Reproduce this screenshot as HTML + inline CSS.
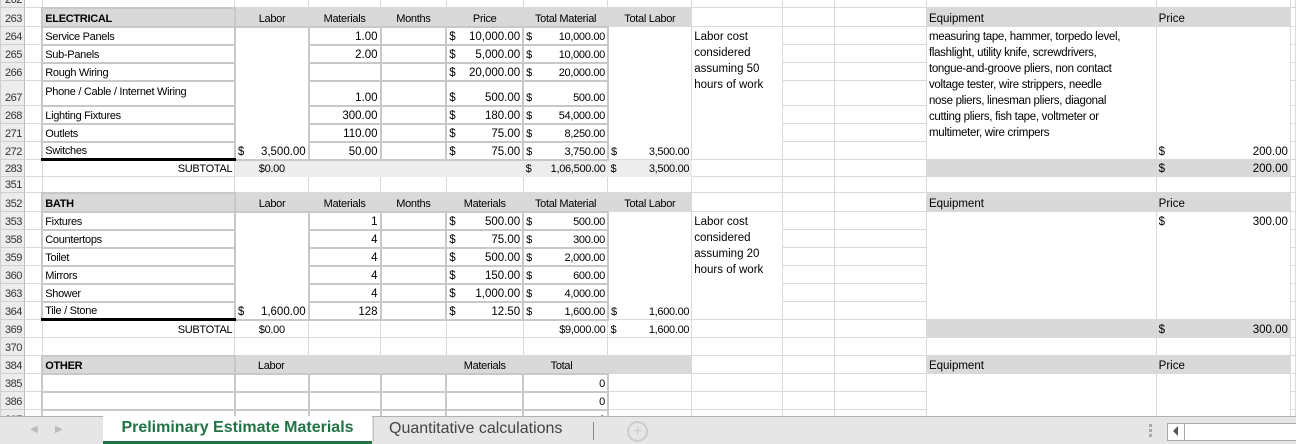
<!DOCTYPE html>
<html><head><meta charset="utf-8"><style>
body{margin:0;width:1296px;height:443px;overflow:hidden;background:#fff;font-family:"Liberation Sans",sans-serif;position:relative}
table{border-collapse:collapse;table-layout:fixed;position:absolute;left:0;top:-10px}
td{border:1px solid #dadada;padding:0 2px;font-size:11px;color:#000;white-space:nowrap;overflow:hidden;letter-spacing:-0.3px;vertical-align:bottom;line-height:14px}
td.rn{background:#ececec;border:1px solid #cfcfcf;border-right:1px solid #bdbdbd;color:#333;font-size:11px;padding-left:4px;letter-spacing:-0.5px}
td.sp{border-left:none}
.h{background:#d9d9d9;border-color:#d9d9d9}
.hb{font-weight:bold}
.c{text-align:center}
.r{text-align:right}
.b{border:2px solid #c8c8c8}
.d{float:left}
.cal{font-size:11.5px;letter-spacing:0}
.sub{background:#ededed;border-color:#ededed}
.sk{background:#d9d9d9;border-color:#d9d9d9}
.top{vertical-align:top}
.wrap{white-space:normal;line-height:16px;letter-spacing:0;padding-top:2px}
.eq{white-space:nowrap;font-size:11.5px;letter-spacing:-0.3px;line-height:16px;padding-top:2px;vertical-align:top}
.tl{border-bottom:3px solid #000}
#tabs{position:absolute;left:0;top:416px;width:1296px;height:27px;background:#e6e6e6;border-top:1px solid #b0b0b0}
</style></head><body>
<table>
<colgroup><col style="width:23px"><col style="width:18px"><col style="width:193px"><col style="width:74px"><col style="width:72px"><col style="width:66px"><col style="width:77px"><col style="width:85px"><col style="width:84px"><col style="width:91px"><col style="width:52px"><col style="width:93px"><col style="width:230px"><col style="width:135px"><col style="width:3px"></colgroup>
<tr style="height:17px"><td class="rn">262</td><td class="sp"></td><td></td><td></td><td></td><td></td><td></td><td></td><td></td><td></td><td></td><td></td><td></td><td></td><td></td></tr>
<tr style="height:19px"><td class="rn">263</td><td class="sp"></td><td class="h hb b">ELECTRICAL</td><td class="h c">Labor</td><td class="h c">Materials</td><td class="h c">Months</td><td class="h c">Price</td><td class="h c">Total Material</td><td class="h c">Total Labor</td><td></td><td></td><td></td><td class="h cal">Equipment</td><td class="h cal">Price</td><td></td></tr>
<tr style="height:18px"><td class="rn">264</td><td class="sp"></td><td class="b">Service Panels</td><td class="b r cal" rowspan="7"><span class="d">$</span>3,500.00</td><td class="b r cal">1.00</td><td class="b"></td><td class="b cal r"><span class="d">$</span>10,000.00</td><td class="b r"><span class="d">$</span>10,000.00</td><td class="r" rowspan="7" style="vertical-align:bottom"><span class="d">$</span>3,500.00</td><td class="wrap top cal" rowspan="7">Labor cost considered assuming 50 hours of work</td><td></td><td></td><td class="eq" rowspan="7">measuring tape, hammer, torpedo level,<br>flashlight, utility knife, screwdrivers,<br>tongue-and-groove pliers, non contact<br>voltage tester, wire strippers, needle<br>nose pliers, linesman pliers, diagonal<br>cutting pliers, fish tape, voltmeter or<br>multimeter, wire crimpers</td><td class="r cal" rowspan="7"><span class="d">$</span>200.00</td><td></td></tr>
<tr style="height:18px"><td class="rn">265</td><td class="sp"></td><td class="b">Sub-Panels</td><td class="b r cal">2.00</td><td class="b"></td><td class="b cal r"><span class="d">$</span>5,000.00</td><td class="b r"><span class="d">$</span>10,000.00</td><td></td><td></td><td></td></tr>
<tr style="height:18px"><td class="rn">266</td><td class="sp"></td><td class="b">Rough Wiring</td><td class="b"></td><td class="b"></td><td class="b cal r"><span class="d">$</span>20,000.00</td><td class="b r"><span class="d">$</span>20,000.00</td><td></td><td></td><td></td></tr>
<tr style="height:25px"><td class="rn">267</td><td class="sp"></td><td class="b" style="vertical-align:top;padding-top:3px">Phone / Cable / Internet Wiring</td><td class="b r cal">1.00</td><td class="b"></td><td class="b cal r"><span class="d">$</span>500.00</td><td class="b r"><span class="d">$</span>500.00</td><td></td><td></td><td></td></tr>
<tr style="height:18px"><td class="rn">268</td><td class="sp"></td><td class="b">Lighting Fixtures</td><td class="b r cal">300.00</td><td class="b"></td><td class="b cal r"><span class="d">$</span>180.00</td><td class="b r"><span class="d">$</span>54,000.00</td><td></td><td></td><td></td></tr>
<tr style="height:18px"><td class="rn">271</td><td class="sp"></td><td class="b">Outlets</td><td class="b r cal">110.00</td><td class="b"></td><td class="b cal r"><span class="d">$</span>75.00</td><td class="b r"><span class="d">$</span>8,250.00</td><td></td><td></td><td></td></tr>
<tr style="height:18px"><td class="rn">272</td><td class="sp"></td><td class="b tl">Switches</td><td class="b r cal">50.00</td><td class="b"></td><td class="b cal r"><span class="d">$</span>75.00</td><td class="b r"><span class="d">$</span>3,750.00</td><td></td><td></td><td></td></tr>
<tr style="height:17px"><td class="rn">283</td><td class="sp"></td><td class="r">SUBTOTAL</td><td class="sub c">$0.00</td><td class="sub"></td><td class="sub"></td><td class="sub"></td><td class="sub r"><span class="d">$</span>1,06,500.00</td><td class="sub r"><span class="d">$</span>3,500.00</td><td></td><td></td><td></td><td class="sk"></td><td class="sk r cal"><span class="d">$</span>200.00</td><td></td></tr>
<tr style="height:16px"><td class="rn">351</td><td class="sp"></td><td></td><td></td><td></td><td></td><td></td><td></td><td></td><td></td><td></td><td></td><td></td><td></td><td></td></tr>
<tr style="height:19px"><td class="rn">352</td><td class="sp"></td><td class="h hb b">BATH</td><td class="h c">Labor</td><td class="h c">Materials</td><td class="h c">Months</td><td class="h c">Materials</td><td class="h c">Total Material</td><td class="h c">Total Labor</td><td></td><td></td><td></td><td class="h cal">Equipment</td><td class="h cal">Price</td><td></td></tr>
<tr style="height:18px"><td class="rn">353</td><td class="sp"></td><td class="b">Fixtures</td><td class="b r cal" rowspan="6"><span class="d">$</span>1,600.00</td><td class="b r cal">1</td><td class="b"></td><td class="b cal r"><span class="d">$</span>500.00</td><td class="b r"><span class="d">$</span>500.00</td><td class="r" rowspan="6"><span class="d">$</span>1,600.00</td><td class="wrap top cal" rowspan="6">Labor cost considered assuming 20 hours of work</td><td></td><td></td><td rowspan="6"></td><td class="r cal top" rowspan="6" style="padding-top:3px"><span class="d">$</span>300.00</td><td></td></tr>
<tr style="height:18px"><td class="rn">358</td><td class="sp"></td><td class="b">Countertops</td><td class="b r cal">4</td><td class="b"></td><td class="b cal r"><span class="d">$</span>75.00</td><td class="b r"><span class="d">$</span>300.00</td><td></td><td></td><td></td></tr>
<tr style="height:18px"><td class="rn">359</td><td class="sp"></td><td class="b">Toilet</td><td class="b r cal">4</td><td class="b"></td><td class="b cal r"><span class="d">$</span>500.00</td><td class="b r"><span class="d">$</span>2,000.00</td><td></td><td></td><td></td></tr>
<tr style="height:18px"><td class="rn">360</td><td class="sp"></td><td class="b">Mirrors</td><td class="b r cal">4</td><td class="b"></td><td class="b cal r"><span class="d">$</span>150.00</td><td class="b r"><span class="d">$</span>600.00</td><td></td><td></td><td></td></tr>
<tr style="height:18px"><td class="rn">363</td><td class="sp"></td><td class="b">Shower</td><td class="b r cal">4</td><td class="b"></td><td class="b cal r"><span class="d">$</span>1,000.00</td><td class="b r"><span class="d">$</span>4,000.00</td><td></td><td></td><td></td></tr>
<tr style="height:18px"><td class="rn">364</td><td class="sp"></td><td class="b tl">Tile / Stone</td><td class="b r cal">128</td><td class="b"></td><td class="b cal r"><span class="d">$</span>12.50</td><td class="b r"><span class="d">$</span>1,600.00</td><td></td><td></td><td></td></tr>
<tr style="height:18px"><td class="rn">369</td><td class="sp"></td><td class="r">SUBTOTAL</td><td class="c">$0.00</td><td></td><td></td><td></td><td class="r">$9,000.00</td><td class="r"><span class="d">$</span>1,600.00</td><td></td><td></td><td></td><td class="sk"></td><td class="sk r cal"><span class="d">$</span>300.00</td><td></td></tr>
<tr style="height:18px"><td class="rn">370</td><td class="sp"></td><td></td><td></td><td></td><td></td><td></td><td></td><td></td><td></td><td></td><td></td><td></td><td></td><td></td></tr>
<tr style="height:18px"><td class="rn">384</td><td class="sp"></td><td class="h hb b">OTHER</td><td class="h c" style="text-align:left;padding-left:22px">Labor</td><td class="h"></td><td class="h"></td><td class="h c">Materials</td><td class="h" style="padding-left:27px">Total</td><td class="h"></td><td></td><td></td><td></td><td class="h cal">Equipment</td><td class="h cal">Price</td><td></td></tr>
<tr style="height:18px"><td class="rn">385</td><td class="sp"></td><td class="b"></td><td class="b"></td><td class="b"></td><td class="b"></td><td class="b"></td><td class="b r">0</td><td></td><td></td><td></td><td></td><td rowspan="3"></td><td rowspan="3"></td><td></td></tr>
<tr style="height:18px"><td class="rn">386</td><td class="sp"></td><td class="b"></td><td class="b"></td><td class="b"></td><td class="b"></td><td class="b"></td><td class="b r">0</td><td></td><td></td><td></td><td></td><td></td></tr>
<tr style="height:18px"><td class="rn">387</td><td class="sp"></td><td class="b"></td><td class="b"></td><td class="b"></td><td class="b"></td><td class="b"></td><td class="b r">0</td><td></td><td></td><td></td><td></td><td></td></tr>
</table>
<div id="tabs">
<div style="position:absolute;left:30px;top:7px;color:#bbb;font-size:10px">&#9664;</div>
<div style="position:absolute;left:55px;top:7px;color:#bbb;font-size:10px">&#9654;</div>
<div style="position:absolute;left:103px;top:-1px;width:269px;height:25px;background:#fff;border-bottom:3px solid #217346;color:#217346;font-weight:bold;font-size:16px;line-height:24px;text-align:center">Preliminary Estimate Materials</div>
<div style="position:absolute;left:373px;top:-1px;width:1px;height:26px;background:#c0c0c0"></div>
<div style="position:absolute;left:389px;top:0;color:#444;font-size:16px;line-height:24px">Quantitative calculations</div>
<div style="position:absolute;left:593px;top:5px;width:1px;height:18px;background:#888"></div>
<div style="position:absolute;left:627px;top:4px;width:17px;height:17px;border:2px solid #ccc;border-radius:50%;color:#ccc;font-size:16px;line-height:17px;text-align:center">+</div>
<div style="position:absolute;left:1149px;top:7px;width:3px;height:3px;background:#aaa;box-shadow:0 5px 0 #aaa,0 10px 0 #aaa"></div>
<div style="position:absolute;left:1167px;top:6px;width:135px;height:16px;background:#fff;border:1px solid #aaa"></div>
<div style="position:absolute;left:1184px;top:6px;width:1px;height:18px;background:#aaa"></div>
<div style="position:absolute;left:1173px;top:9px;width:0;height:0;border-top:5px solid transparent;border-bottom:5px solid transparent;border-right:5px solid #555"></div>
</div>
</body></html>
